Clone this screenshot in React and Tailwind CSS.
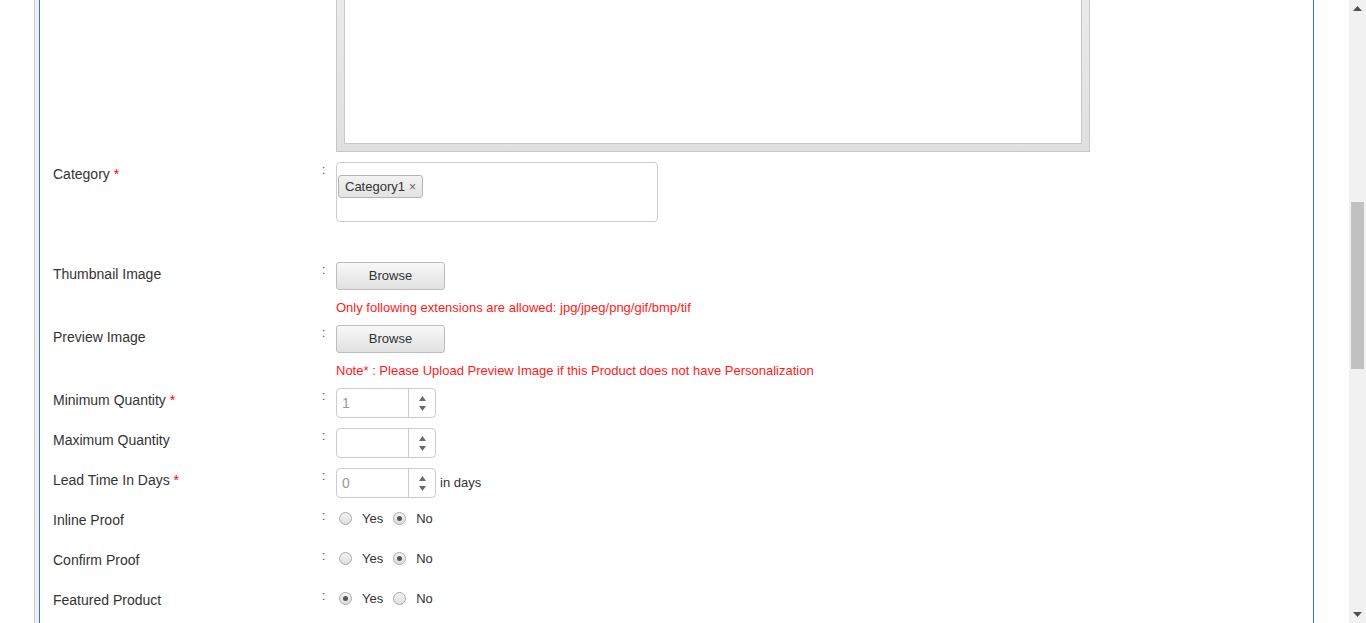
import React from "react";

const Req = () => <span className="text-[#ff0000]"> *</span>;

function Row({ label, required, children, className = "", colon = true }) {
  return (
    <div className={`flex items-start ${className}`}>
      <div className="w-[269px] pt-[2px] text-[14px] leading-[20px] text-[#333]">
        {label}
        {required && <Req />}
      </div>
      <div className="w-[14px] -mt-[2px] text-[12px] leading-[20px] text-[#5a4a4a]">{colon ? ":" : ""}</div>
      <div className="flex-1">{children}</div>
    </div>
  );
}

function BrowseButton() {
  return (
    <button className="w-[109px] h-[28px] rounded-[3px] border border-[#bdbdbd] bg-linear-to-b from-[#f8f8f8] to-[#e1e1e1] text-[13px] text-[#333]">
      Browse
    </button>
  );
}

function NumberBox({ value, suffix }) {
  return (
    <div className="flex items-center">
      <div className="flex w-[100px] h-[30px] rounded-[4px] border border-[#cccccc] bg-white">
        <div className="flex-1 pl-[5px] text-[14px] leading-[28px] text-[#999]">{value}</div>
        <div className="w-[27px] border-l border-[#cccccc] flex flex-col items-center justify-center gap-[5px]">
          <svg width="7" height="5" viewBox="0 0 7 5" className="block">
            <path d="M3.5 0L7 5H0z" fill="#6b6b6b" />
          </svg>
          <svg width="7" height="5" viewBox="0 0 7 5" className="block">
            <path d="M0 0h7L3.5 5z" fill="#6b6b6b" />
          </svg>
        </div>
      </div>
      {suffix && <span className="ml-[4px] text-[13px] text-[#333]">{suffix}</span>}
    </div>
  );
}

function Radio({ checked }) {
  return (
    <span className="flex w-[13px] h-[13px] rounded-full border border-[#a9a9a9] bg-linear-to-b from-[#f4f4f4] to-[#dedede] items-center justify-center">
      {checked && <span className="block w-[5px] h-[5px] rounded-full bg-[#555]" />}
    </span>
  );
}

function YesNo({ yes }) {
  return (
    <div className="flex items-center h-[20px] mt-[0px] text-[13px] text-[#333]">
      <div className="ml-[3px]"><Radio checked={yes} /></div>
      <span className="ml-[10px] leading-[20px] mt-[2px]">Yes</span>
      <div className="ml-[10px]"><Radio checked={!yes} /></div>
      <span className="ml-[10px] leading-[20px] mt-[2px]">No</span>
    </div>
  );
}

export default function App() {
  return (
    <div className="flex h-[623px] overflow-hidden bg-white font-['Liberation_Sans',Arial,sans-serif]">
      <div className="flex-1 overflow-hidden">
        <div className="ml-[34px] w-[1280px] h-[623px] border-l border-[#c9c9c9] bg-[#efefef] pl-[4px]">
          <div className="h-full border-l border-r border-[#2b7bbd] bg-white pl-[13px]">
            {/* Description editor (scrolled) */}
            <Row label="" colon={false}>
              <div className="-mt-[42px] w-[754px] h-[194px] border border-[#c8c8c8] bg-linear-to-b from-[#ededed] to-[#e0e0e0] p-[7px]">
                <div className="h-full border border-[#c8c8c8] bg-white" />
              </div>
            </Row>

            <Row label="Category" required className="mt-[10px]">
              <div className="w-[322px] h-[60px] rounded-[4px] border border-[#cccccc] bg-white pt-[11px] pl-[1px]">
                <span className="inline-flex items-center h-[23px] px-[6px] rounded-[3px] border border-[#b4b4b4] bg-linear-to-b from-[#f2f2f2] to-[#e3e3e3] text-[13px] text-[#333]">
                  Category1
                  <span className="ml-[4px] text-[12px] text-[#666]">×</span>
                </span>
              </div>
            </Row>

            <Row label="Thumbnail Image" className="mt-[40px]">
              <BrowseButton />
              <div className="mt-[9px] text-[13px] leading-[18px] text-[#ff1a1a]">
                Only following extensions are allowed: jpg/jpeg/png/gif/bmp/tif
              </div>
            </Row>

            <Row label="Preview Image" className="mt-[8px]">
              <BrowseButton />
              <div className="mt-[9px] text-[13px] leading-[18px] text-[#ff1a1a]">
                Note* : Please Upload Preview Image if this Product does not have Personalization
              </div>
            </Row>

            <Row label="Minimum Quantity" required className="mt-[8px]">
              <NumberBox value="1" />
            </Row>
            <Row label="Maximum Quantity" className="mt-[10px]">
              <NumberBox value="" />
            </Row>
            <Row label="Lead Time In Days" required className="mt-[10px]">
              <NumberBox value="0" suffix="in days" />
            </Row>

            <Row label="Inline Proof" className="mt-[10px] h-[30px]">
              <YesNo yes={false} />
            </Row>
            <Row label="Confirm Proof" className="mt-[10px] h-[30px]">
              <YesNo yes={false} />
            </Row>
            <Row label="Featured Product" className="mt-[10px] h-[30px]">
              <YesNo yes={true} />
            </Row>
          </div>
        </div>
      </div>

      {/* scrollbar */}
      <div className="w-[17px] h-[623px] bg-[#f1f1f1] flex flex-col items-center">
        <div className="h-[17px] flex items-center justify-center">
          <svg width="9" height="5" viewBox="0 0 9 5">
            <path d="M4.5 0L9 5H0z" fill="#505050" />
          </svg>
        </div>
        <div className="flex-1 w-full px-[2px]">
          <div className="mt-[185px] h-[167px] bg-[#c1c1c1]" />
        </div>
        <div className="h-[17px] flex items-center justify-center">
          <svg width="9" height="5" viewBox="0 0 9 5">
            <path d="M0 0h9L4.5 5z" fill="#505050" />
          </svg>
        </div>
      </div>
    </div>
  );
}
